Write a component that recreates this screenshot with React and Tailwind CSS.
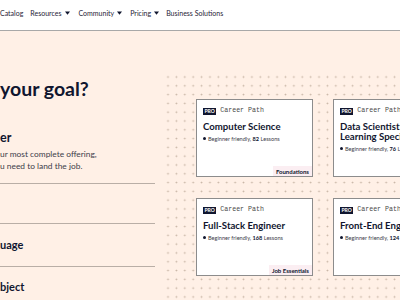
import React from "react";

const Caret = () => (
  <svg width="5" height="4" viewBox="0 0 5 4" className="ml-[3px]">
    <path d="M0 0.5 L5 0.5 L2.5 3.8 Z" fill="#10162f" />
  </svg>
);

function Card({ title, lessons, tag }) {
  return (
    <div className="relative w-[117px] h-[78px] shrink-0 bg-white border border-[#8c8c8c] flex flex-col px-[6px] pt-[8px]">
      <div className="flex items-center gap-[4px] h-[7px]">
        <span className="bg-[#10162f] text-white text-[5px] font-bold leading-none px-[1.5px] py-[1px] font-['Lato',sans-serif]">PRO</span>
        <span className="text-[6.6px] leading-none text-[#4a4a4a] font-['Liberation_Mono',monospace] whitespace-nowrap">Career Path</span>
      </div>
      <div className="mt-[7px] text-[9.6px] leading-[10px] font-bold text-[#10162f] font-['Lato',sans-serif] whitespace-pre">{title}</div>
      <div className="mt-[4px] flex items-center gap-[2px] text-[5.6px] leading-none text-[#3d3d4a] font-['Lato',sans-serif] whitespace-nowrap">
        <span className="w-[3px] h-[3px] rounded-full bg-[#10162f]" />
        <span>
          Beginner friendly, <b className="text-[#10162f]">{lessons}</b> Lessons
        </span>
      </div>
      {tag && (
        <div className="absolute right-0 bottom-0 h-[10px] px-[3px] bg-[#fbeef2] flex items-center text-[6px] font-bold text-[#10162f] font-['Lato',sans-serif] whitespace-nowrap">
          {tag}
        </div>
      )}
    </div>
  );
}

export default function App() {
  return (
    <div className="w-[400px] h-[300px] overflow-hidden bg-[#fff0e6] font-['Lato',sans-serif] text-[#10162f]">
      <nav className="h-[31px] bg-white border-b border-[#a8a8a8] flex items-start pt-[9px] text-[7px] text-[#1f2336] whitespace-nowrap">
        <span className="leading-[8px]">Catalog</span>
        <span className="ml-[7px] flex items-center leading-[8px]">Resources<Caret /></span>
        <span className="ml-[9px] flex items-center leading-[8px]">Community<Caret /></span>
        <span className="ml-[8px] flex items-center leading-[8px]">Pricing<Caret /></span>
        <span className="ml-[7px] leading-[8px]">Business Solutions</span>
      </nav>
      <div className="flex">
        <div className="w-[164px] shrink-0 flex flex-col">
          <div className="mt-[47px] text-[19.5px] leading-[22px] font-bold whitespace-nowrap">your goal?</div>
          <div className="mt-[31px] text-[12.5px] leading-[14px] font-bold">er</div>
          <div className="mt-[3px] text-[8.4px] leading-[12px] text-[#3d3d4a] whitespace-nowrap">
            <div>ur most complete offering,</div>
            <div>u need to land the job.</div>
          </div>
          <div className="mt-[11px] w-[155px] border-t border-[#b9aea6]" />
          <div className="h-[39px]" />
          <div className="w-[155px] border-t-[1.5px] border-[#b9aea6]" />
          <div className="h-[42px] flex items-center text-[11px] font-bold">uage</div>
          <div className="w-[155px] border-t border-[#b9aea6]" />
          <div className="h-[40px] flex items-center text-[11px] font-bold">bject</div>
        </div>
        <div className="mt-[42px] flex-1 h-[260px] pl-[32px] pt-[26px] bg-[radial-gradient(circle,#c6b3a3_0.7px,transparent_1.1px)] bg-[length:8.4px_8.8px] bg-[position:-0.2px_-0.4px]">
          <div className="flex flex-col gap-[21px]">
            <div className="flex gap-[20px]">
              <Card title="Computer Science" lessons="82" tag="Foundations" />
              <Card title={"Data Scientist:\nLearning Specialist"} lessons="76" />
            </div>
            <div className="flex gap-[20px]">
              <Card title="Full-Stack Engineer" lessons="168" tag="Job Essentials" />
              <Card title="Front-End Engineer" lessons="124" />
            </div>
          </div>
        </div>
      </div>
    </div>
  );
}
